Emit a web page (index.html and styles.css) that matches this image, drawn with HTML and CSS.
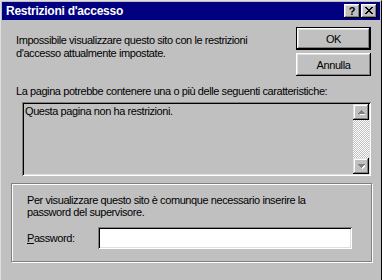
FILE: index.html
```html
<!DOCTYPE html>
<html lang="it">
<head>
   <meta charset="UTF-8">
   <title>Restrizioni d'accesso</title>
   <link rel="stylesheet" href="styles.css">
</head>
<body>
   <div class="window">
      <div class="title-bar">
         <span class="title-text">Restrizioni d'accesso</span>
         <div class="title-btns">
            <span class="tbtn help-btn">?</span>
            <span class="tbtn close-btn">
               <svg width="8" height="7" viewBox="0 0 8 7" shape-rendering="crispEdges">
                  <path d="M0 0h2v1h-2zM6 0h2v1h-2zM1 1h2v1h-2zM5 1h2v1h-2zM2 2h4v1h-4zM3 3h2v1h-2zM2 4h4v1h-4zM1 5h2v1h-2zM5 5h2v1h-2zM0 6h2v1h-2zM6 6h2v1h-2z" fill="#000"/>
               </svg>
            </span>
         </div>
      </div>

      <div class="client">
         <div class="top-row">
            <p class="msg">Impossibile visualizzare questo sito con le restrizioni<br>d'accesso attualmente impostate.</p>
            <div class="btn-col">
               <button class="btn default-btn">OK</button>
               <button class="btn">Annulla</button>
            </div>
         </div>

         <p class="list-label">La pagina potrebbe contenere una o più delle seguenti caratteristiche:</p>
         <div class="listbox">
            <div class="list-text">Questa pagina non ha restrizioni.</div>
            <div class="vscroll">
               <span class="sbtn">
                  <svg width="7" height="5" viewBox="0 0 7 5" shape-rendering="crispEdges">
                     <path d="M4 1h1v1h1v1h1v1h-6v-1h1z" fill="#fff" transform="translate(1 1)"/>
                     <path d="M3 0h1v1h1v1h1v1h1v1h-7v-1h1v-1h1v-1h1z" fill="#808080"/>
                  </svg>
               </span>
               <span class="strack"></span>
               <span class="sbtn">
                  <svg width="7" height="5" viewBox="0 0 7 5" shape-rendering="crispEdges">
                     <path d="M0 0h7v1h-1v1h-1v1h-1v1h-1v-1h-1v-1h-1v-1h-1z" fill="#fff" transform="translate(1 1)"/>
                     <path d="M0 0h7v1h-1v1h-1v1h-1v1h-1v-1h-1v-1h-1v-1h-1z" fill="#808080"/>
                  </svg>
               </span>
            </div>
         </div>

         <div class="group">
            <p class="group-msg">Per visualizzare questo sito è comunque necessario inserire la<br>password del supervisore.</p>
            <div class="pw-row">
               <label class="pw-label"><u>P</u>assword:</label>
               <div class="pw-input"></div>
            </div>
         </div>
      </div>
   </div>
</body>
</html>
```

FILE: styles.css
```css
:root {
   --face: #c0c0c0;
   --shadow: #808080;
   --light: #dfdfdf;
   --navy: #000080;
}
* {
   box-sizing: border-box;
}
html, body {
   margin: 0;
   padding: 0;
   background: var(--face);
}
body {
   font-family: "Liberation Sans", Arial, sans-serif;
   font-size: 11px;
   letter-spacing: -0.42px;
   color: #000;
   overflow: hidden;
}
p {
   margin: 0;
}
.window {
   width: 382px;
   height: 280px;
   border: 1px solid;
   border-bottom: none;
   border-color: var(--light) #000 #000 var(--light);
   background: var(--face);
}
.title-bar {
   margin: 1px 1px 0 1px;
   height: 18px;
   background: var(--navy);
   display: flex;
   align-items: center;
   justify-content: space-between;
   padding: 0 3px 0 4px;
}
.title-text {
   color: #fff;
   font-weight: bold;
   font-size: 12px;
   letter-spacing: -0.25px;
}
.title-btns {
   display: flex;
   gap: 1px;
}
.tbtn {
   width: 16px;
   height: 14px;
   background: var(--face);
   box-shadow: inset -1px -1px #000, inset 1px 1px #fff, inset -2px -2px var(--shadow), inset 2px 2px var(--light);
   display: flex;
   align-items: center;
   justify-content: center;
}
.help-btn {
   font-weight: bold;
   font-size: 11px;
   letter-spacing: 0;
   line-height: 14px;
   padding-bottom: 1px;
}
.close-btn svg {
   display: block;
   margin-top: -1px;
}
.client {
   padding: 7px 9px 0 10px;
}
.top-row {
   display: flex;
   justify-content: space-between;
}
.msg {
   margin: 7px 0 0 5px;
   line-height: 13px;
}
.btn-col {
   display: flex;
   flex-direction: column;
   gap: 3px;
   margin-right: 1px;
}
.btn {
   width: 75px;
   height: 23px;
   font-family: inherit;
   font-size: 11px;
   letter-spacing: inherit;
   background: var(--face);
   border: none;
   padding: 0;
   box-shadow: inset -1px -1px #000, inset 1px 1px #fff, inset -2px -2px var(--shadow), inset 2px 2px var(--light);
}
.default-btn {
   border: 1px solid #000;
}
.list-label {
   margin: 9px 0 0 5px;
   line-height: 13px;
}
.listbox {
   margin: 4px 1px 0 11px;
   height: 74px;
   display: flex;
   background: var(--face);
   box-shadow: inset 1px 1px var(--shadow), inset -1px -1px #fff, inset 2px 2px #000, inset -2px -2px var(--light);
   padding: 2px;
}
.list-text {
   flex: 1;
   padding: 1px 0 0 1px;
   line-height: 13px;
}
.vscroll {
   width: 16px;
   display: flex;
   flex-direction: column;
}
.sbtn {
   width: 16px;
   height: 16px;
   background: var(--face);
   box-shadow: inset -1px -1px #000, inset 1px 1px var(--light), inset -2px -2px var(--shadow), inset 2px 2px #fff;
   display: flex;
   align-items: center;
   justify-content: center;
}
.sbtn svg {
   display: block;
}
.strack {
   flex: 1;
   background-image: conic-gradient(#fff 25%, var(--face) 0 50%, #fff 0 75%, var(--face) 0);
   background-size: 2px 2px;
}
.group {
   margin: 7px 0 0 0;
   height: 79px;
   border: 1px solid var(--shadow);
   box-shadow: inset 1px 1px #fff, 1px 1px #fff;
   padding: 10px 0 0 15px;
}
.group-msg {
   line-height: 12px;
}
.pw-row {
   display: flex;
   align-items: center;
   margin-top: 9px;
}
.pw-label {
   width: 71px;
}
.pw-input {
   width: 254px;
   height: 22px;
   background: #fff;
   box-shadow: inset 1px 1px var(--shadow), inset -1px -1px #fff, inset 2px 2px #000, inset -2px -2px var(--light);
}
```
